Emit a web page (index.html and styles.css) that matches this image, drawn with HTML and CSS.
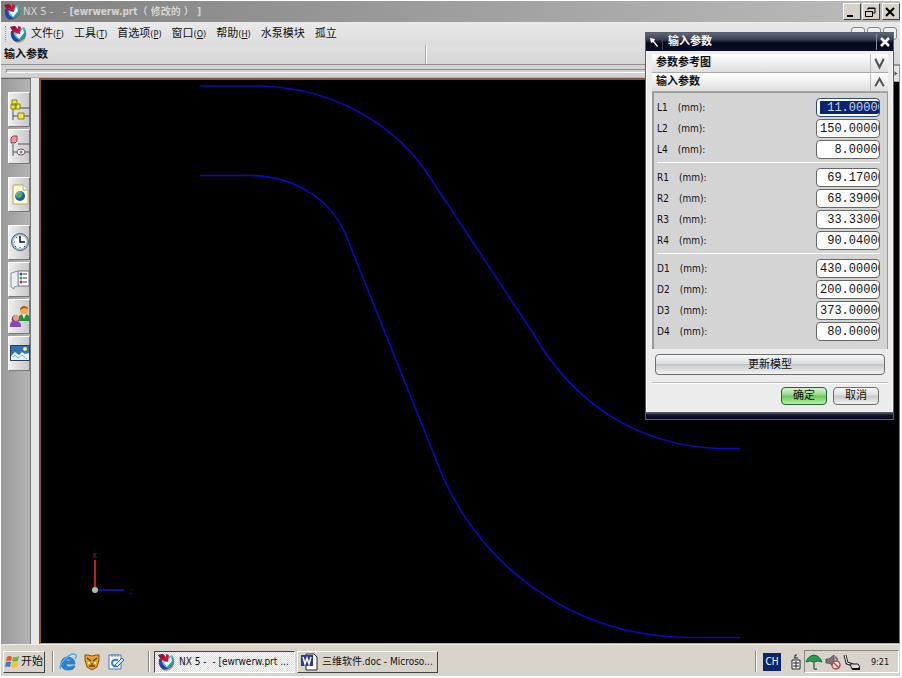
FILE: index.html
```html
<!DOCTYPE html>
<html lang="zh-CN">
<head>
<meta charset="utf-8">
<title>NX 5 - [ewrwerw.prt（修改的）]</title>
<link rel="stylesheet" href="styles.css">
</head>
<body>
<svg class="defs" aria-hidden="true">
  <defs>
    <linearGradient id="teal" x1="0" y1="0" x2="1" y2="1"><stop offset="0" stop-color="#d8fbf6"/><stop offset=".5" stop-color="#3bb3b0"/><stop offset="1" stop-color="#1c5f9a"/></linearGradient>
    <radialGradient id="globe" cx=".35" cy=".3"><stop offset="0" stop-color="#a8ddf5"/><stop offset="1" stop-color="#155fa8"/></radialGradient>
    <symbol id="nx" viewBox="0 0 18 18">
      <path d="M6 6l9-4c3 4 3 9 0 12s-8 3-10 1z" fill="url(#teal)"/>
      <path d="M2 6c-1 5 1 9 5 11l5-1C7 14 5 11 5 6z" fill="#2347a8"/>
      <path d="M7 10l7-6 1 4-5 6z" fill="#dffaf4"/>
      <path d="M1 2l5-1 3 3V1l3 1-1 7-7-2z" fill="#c5163e"/>
      <path d="M1 2l5-1 2 3-4 2z" fill="#8c1640"/>
      <path d="M7 17c4 1 8-1 9-4" fill="none" stroke="#c8893c"/>
    </symbol>
  </defs>
</svg>

<header class="titlebar">
  <svg class="logo"><use href="#nx"/></svg>
  <h1><span>NX 5 -&nbsp;&nbsp; - </span>[ewrwerw.prt（ 修改的 ） ]</h1>
  <div class="window-buttons">
    <button aria-label="最小化"><svg viewBox="0 0 14 12"><path d="M3 10h6" stroke="#000" stroke-width="2"/></svg></button>
    <button aria-label="还原"><svg viewBox="0 0 14 12"><path d="M5 4V2h7v5h-2M5 2.500h7M2 5.500h7M2.500 5v5.500h7V5" fill="none" stroke="#000"/></svg></button>
    <button aria-label="关闭"><svg viewBox="0 0 14 12"><path d="M3 2l8 8M11 2l-8 8" stroke="#000" stroke-width="2"/></svg></button>
  </div>
</header>

<nav class="menubar">
  <span class="grip"></span>
  <svg class="logo"><use href="#nx"/></svg>
  <a href="#">文件<small>(<u>F</u>)</small></a>
  <a href="#">工具<small>(<u>T</u>)</small></a>
  <a href="#">首选项<small>(<u>P</u>)</small></a>
  <a href="#">窗口<small>(<u>O</u>)</small></a>
  <a href="#">帮助<small>(<u>H</u>)</small></a>
  <a href="#">水泵模块</a>
  <a href="#">孤立</a>
  <div class="child-buttons"><i></i><i></i><i></i></div>
</nav>

<div class="prompt"><strong>输入参数</strong><span></span></div>
<div class="toolbar-strip"><span></span><button aria-label="更多工具"><svg viewBox="0 0 8 16"><path d="M2 5l4 3-4 3z" fill="#555"/></svg></button></div>

<main>
  <aside>
    <div class="tabs">
      <button aria-label="装配导航器"><svg viewBox="0 0 21 33">
        <path d="M4 16v11M4 23h5M10 15h11M15 23h6" fill="none" stroke="#4b4a70"/>
        <path d="M3 7h5v5H3zM2 11h5v5H2zM6 11h5v5H6zM9 20h6v6H9z" fill="#f0e83c" stroke="#8c8510"/></svg></button>
      <button aria-label="部件导航器"><svg viewBox="0 0 21 33">
        <path d="M4 14v12M4 22h5M9 14h12M16 22h5" fill="none" stroke="#57546f"/>
        <path d="M2 8l2-2h4v5l-2 2H2z" fill="#e79a9c" stroke="#8c4149"/><ellipse cx="12" cy="22" rx="4" ry="3" fill="#fff" stroke="#705258"/><circle cx="12" cy="22" r="1" fill="#ddd" stroke="#705258"/></svg></button>
      <button class="spaced" aria-label="浏览器"><svg viewBox="0 0 21 33">
        <path d="M4 7h10l5 5v14H4z" fill="#fffbd0" stroke="#bca858"/><path d="M14 7v5h5" fill="#f5f5f5" stroke="#9daab6"/><circle cx="11" cy="18" r="5" fill="url(#globe)"/><path d="M8 15l3-1 2 3-2 3-3-2z" fill="#5fb13c"/></svg></button>
      <button class="spaced" aria-label="历史记录"><svg viewBox="0 0 21 33">
        <circle cx="11" cy="16" r="8.500" fill="#a9c1d4" stroke="#52606d"/><circle cx="11" cy="16" r="6.500" fill="#f3f9ff"/><path d="M11 10v6h5" fill="none" stroke="#111" stroke-width="1.500"/><path d="M5 16h1M11 21v1M7 11l1 1M15 20l1 1M7 20l-1 1" stroke="#456"/></svg></button>
      <button aria-label="系统材料"><svg viewBox="0 0 21 33">
        <path d="M9 8h11v15H9z" fill="#fff" stroke="#6b7583"/><path d="M2 10l7-2v15l-4 1v2l-3-2z" fill="#e8eef2" stroke="#8593a0"/><path d="M14 11h4M14 15h4M14 19h4" stroke="#333"/><circle cx="12" cy="11" r="1.500" fill="#2e46c6"/><circle cx="12" cy="15" r="1.500" fill="#2ea04a"/><circle cx="12" cy="19" r="1.500" fill="#d0204a"/></svg></button>
      <button aria-label="角色"><svg viewBox="0 0 21 33">
        <path d="M9 21c0-5 2-7 6-7s6 2 6 7z" fill="#2c8a3c"/><path d="M13 14l2 5 2-5z" fill="#d9f1d8"/><circle cx="15" cy="10" r="4" fill="#f0a850"/><path d="M11 10c0-5 8-5 8-1-3-1-5-1-8 1z" fill="#b85c1c"/>
        <path d="M1 27c0-5 1-6 5-6s6 1 6 6z" fill="#8346c2"/><path d="M3 21c-2-7 8-9 7 0z" fill="#6d3a68"/><circle cx="7" cy="18" r="3" fill="#e9a07c"/></svg></button>
      <button aria-label="系统可视化场景"><svg viewBox="0 0 21 33">
        <path d="M1.500 8.500h19v15h-19z" fill="#2f72b8" stroke="#2b3d55"/><circle cx="16" cy="12" r="2" fill="#ffee50"/><path d="M2 19l4-4 4 3 3-3 3 2 4-1v7H2z" fill="#e9f3fb"/><path d="M4 20l2-2 3 3 4-3 5 4" fill="none" stroke="#8fb1cf"/></svg></button>
    </div>
    <div class="gutter"></div>
  </aside>
  <section class="viewport">
    <svg viewBox="41 80 858 563" preserveAspectRatio="xMinYMin meet" role="img" aria-label="流道轮廓曲线">
      <g fill="none" stroke="#0c08c0" stroke-width="1.600">
        <path d="M200 86H258C325 87 387 117 425 170L533 333C574 405 640 446 720 448.500H740"/>
        <path d="M200 175.500H250C297 176 333 201 347 238L435 457C472 560 567 637 690 637.500H740"/>
      </g>
      <path d="M95 560v27" stroke="#c81c24" stroke-width="2"/>
      <path d="M98 590h26" stroke="#1010b0" stroke-width="2"/>
      <circle cx="95" cy="590" r="3" fill="#a3c79b"/>
      <text x="92" y="558" fill="#b01820">X</text>
      <text x="129" y="594" fill="#08087c">Z</text>
    </svg>
  </section>
</main>

<form class="dialog">
  <header>
    <svg class="pin" viewBox="0 0 16 16"><path d="M4 4l5 1-1 2 4 5-1 1-4-5-2 1z" fill="#fff"/></svg>
    <h2>输入参数</h2>
    <button type="button" aria-label="关闭"><svg viewBox="0 0 16 16"><path d="M4 4l8 8M12 4l-8 8" stroke="#fff" stroke-width="2.500"/></svg></button>
  </header>
  <div class="body">
    <button type="button" class="section"><span>参数参考图</span><svg viewBox="0 0 16 16"><path d="M4 4l4 8 4-8" fill="none" stroke="#555" stroke-width="2"/></svg></button>
    <button type="button" class="section"><span>输入参数</span><svg viewBox="0 0 16 16"><path d="M4 12l4-7 4 7" fill="none" stroke="#555" stroke-width="2"/></svg></button>
    <div class="fields">
      <div class="group">
        <label for="l1"><b>L1</b>(mm):</label><input id="l1" class="selected" value=" 11.00000">
        <label for="l2"><b>L2</b>(mm):</label><input id="l2" value="150.00000">
        <label for="l4"><b>L4</b>(mm):</label><input id="l4" value="  8.00000">
      </div>
      <div class="group">
        <label for="r1"><b>R1</b>(mm):</label><input id="r1" value=" 69.17000">
        <label for="r2"><b>R2</b>(mm):</label><input id="r2" value=" 68.39000">
        <label for="r3"><b>R3</b>(mm):</label><input id="r3" value=" 33.33000">
        <label for="r4"><b>R4</b>(mm):</label><input id="r4" value=" 90.04000">
      </div>
      <div class="group">
        <label for="d1"><b>D1</b>(mm):</label><input id="d1" value="430.00000">
        <label for="d2"><b>D2</b>(mm):</label><input id="d2" value="200.00000">
        <label for="d3"><b>D3</b>(mm):</label><input id="d3" value="373.00000">
        <label for="d4"><b>D4</b>(mm):</label><input id="d4" value=" 80.00000">
      </div>
    </div>
    <button type="button" class="push update">更新模型</button>
    <div class="actions">
      <button type="button" class="push ok">确定</button>
      <button type="button" class="push">取消</button>
    </div>
  </div>
  <footer></footer>
</form>

<footer class="taskbar">
  <button class="start"><svg viewBox="0 0 16 16"><path d="M3 3q2-2 5 0L7 7Q4 6 2 7z" fill="#e8562c"/><path d="M9 3q3 1 6-1l-1 5q-3 1-6 0z" fill="#6cb33f"/><path d="M2 8q2-1 5 0l-1 5q-3-1-5 0z" fill="#3f78d0"/><path d="M8 8q3 1 6 0l-1 5q-3 1-6 0z" fill="#f4c22c"/></svg>开始</button>
  <span class="divider"></span>
  <div class="quick">
    <svg viewBox="0 0 18 18"><path d="M16 11H7q0 3 3 3 2 0 3-1h3q-1 4-7 4-7 0-7-7 1-6 7-6 7 1 7 7zM7 8h5q-1-2-3-2T7 8z" fill="#2b82c9" stroke="#2b82c9"/><path d="M2 16Q-1 13 6 6t11-4q1 1-1 4" fill="none" stroke="#55aee8" stroke-width="1.500"/></svg>
    <svg viewBox="0 0 18 18"><path d="M2 2h3l4 1 4-1h3v5l-2 7-5 3-5-3-2-7z" fill="#e8a428" stroke="#805018"/><path d="M4 5l4 3M14 5l-4 3M6 13h6" stroke="#643a0c" stroke-width="1.500"/><path d="M5 9h2v2H5zM11 9h2v2h-2z" fill="#fff3a0"/><path d="M8 10h2v3H8z" fill="#945518"/></svg>
    <svg viewBox="0 0 18 18"><path d="M2 2h12v14H2z" fill="#f7fbff" stroke="#477bb0"/><path d="M5 1v3M8 1v3M11 1v3" stroke="#477bb0"/><path d="M11 7q-6-1-6 3t6 3" fill="none" stroke="#3b7ec0" stroke-width="2"/><path d="M8 12l7-7 2 2-7 7z" fill="#cfe8f4" stroke="#355e80"/></svg>
  </div>
  <span class="divider"></span>
  <button class="task active"><svg><use href="#nx"/></svg>NX 5 -&nbsp; - [ewrwerw.prt ...</button>
  <button class="task"><svg viewBox="0 0 18 18"><path d="M6 1h8l3 3v13H6z" fill="#fff" stroke="#222"/><path d="M1 2h12v11H1z" fill="#293a94"/><path d="M3 4l2 7 2-6 2 6 2-7" fill="none" stroke="#fff" stroke-width="1.500"/></svg>三维软件.doc - Microso...</button>
  <span class="divider end"></span>
  <span class="language">CH</span>
  <svg class="ime" viewBox="0 0 12 18"><path d="M2 7h8v9H2z" fill="#fff" stroke="#222"/><path d="M5 5V2h2M4 5h4M3 10h6M3 13h6M6 8v7" fill="none" stroke="#222"/></svg>
  <div class="tray">
    <svg viewBox="0 0 18 18"><path d="M1 9q2-6 8-7 6 1 8 7l-4-1-4 1-4-1z" fill="#299a50" stroke="#14723a"/><path d="M9 8v7q0 2 3 1" fill="none" stroke="#476b50" stroke-width="1.500"/></svg>
    <svg viewBox="0 0 18 18"><path d="M2 6h3l5-4v11L5 10H2z" fill="#777" stroke="#555"/><path d="M11 4q4 2 1 7" fill="none" stroke="#777" stroke-width="2"/><circle cx="12" cy="12" r="4" fill="#eee" stroke="#bd4242" stroke-width="1.500"/><path d="M9 9l6 6" stroke="#bd4242" stroke-width="1.500"/></svg>
    <svg viewBox="0 0 18 18"><path d="M2 2l2 8 6 2" fill="none" stroke="#222" stroke-width="3"/><path d="M2 2l2 8 6 2" fill="none" stroke="#fff"/><path d="M7 11h8l2 3-3 2H9z" fill="#ddd" stroke="#222"/><path d="M9 16h8" stroke="#111" stroke-width="2"/></svg>
    <time>9:21</time>
  </div>
</footer>
</body>
</html>
```
FILE: styles.css
```css
* { box-sizing: border-box; }

body {
  margin: 0;
  padding: 1px 2px 2px 1px;
  min-height: 100vh;
  display: flex;
  flex-direction: column;
  position: relative;
  background: #fff;
  color: #111;
  font: 11px/16px "DejaVu Sans Condensed", "Noto Sans CJK SC", sans-serif;
}

button, input { font: inherit; color: inherit; margin: 0; }
button { padding: 0; }
h1, h2 { margin: 0; font-size: 11px; }
a { color: inherit; text-decoration: none; }
svg { display: block; flex: none; }
.defs { position: absolute; width: 0; height: 0; }
.logo { width: 18px; height: 18px; }

.titlebar {
  height: 21px;
  display: flex;
  align-items: center;
  padding: 0 0 0 2px;
  background: linear-gradient(90deg, #808080, #bcbcbc);
}
.titlebar h1 { flex: 1; padding-left: 2px; color: #d6d3ce; font-size: 10px; white-space: nowrap; }
.titlebar h1 span { font-weight: normal; font-size: 11px; }
.window-buttons { display: flex; }
.window-buttons button {
  width: 18px;
  height: 17px;
  background: #d6d2ca;
  border: 1px solid;
  border-color: #fff #404040 #404040 #fff;
}
.window-buttons button:last-child { margin-left: 2px; }
.window-buttons button:nth-child(2) { margin-left: 1px; }
.window-buttons svg { width: 14px; height: 12px; }

.menubar {
  height: 23px;
  display: flex;
  align-items: center;
  gap: 10px;
  padding-left: 4px;
  background: linear-gradient(#eaeaea, #dcdcdc);
  white-space: nowrap;
}
.menubar .logo { margin-right: -6px; }
.menubar small { font-size: 9px; }
.grip { width: 2px; height: 16px; margin-right: -8px; border-left: 1px dotted #999; }
.child-buttons { display: flex; gap: 2px; margin-left: auto; padding-right: 3px; }
.child-buttons i { width: 14px; height: 13px; border: 1px solid #888; border-radius: 3px; background: #eee; }

.prompt {
  height: 19px;
  display: grid;
  grid-template-columns: 424px 1fr;
  background: linear-gradient(#dfdfdf, #d6d6d6);
}
.prompt strong { padding: 2px 0 0 3px; }
.prompt span { border-left: 1px solid #aaa; box-shadow: inset 1px 0 #fff; }

.toolbar-strip {
  position: relative;
  height: 14px;
  padding: 4px 3px 0 5px;
  background: #d2d2d2;
  border-top: 1px solid #929292;
  border-bottom: 1px solid #b4b4b4;
}
.toolbar-strip span { display: block; height: 4px; border: 1px solid; border-color: #8c8c8c #fff #fff #8c8c8c; }
.toolbar-strip button { position: absolute; top: 0; right: 0; width: 8px; height: 17px; border: 1px solid #999; background: #e4e4e4; }
.toolbar-strip svg { width: 6px; height: 15px; }

main { flex: 1; display: flex; min-height: 0; }
aside { display: flex; width: 38px; flex: none; }
.tabs {
  width: 30px;
  padding: 13px 0 0 7px;
  background: linear-gradient(90deg, #999, #b4b4b4);
  border-top: 1px solid #666;
  border-right: 1px solid #777;
  display: flex;
  flex-direction: column;
  gap: 2px;
}
.tabs button {
  height: 35px;
  background: linear-gradient(90deg, #eee, #c8c8c8);
  border: 1px solid;
  border-color: #fff #777 #777 #fff;
}
.tabs .spaced { margin-top: 11px; }
.tabs svg { width: 21px; height: 33px; }
.gutter { flex: 1; background: #e8e8e8; }

.viewport {
  flex: 1;
  min-width: 0;
  background: #000;
  border: 2px solid #86543a;
  border-right: 1px solid #c05a42;
  border-bottom: 1px solid #e8a070;
  overflow: hidden;
}
.viewport svg { width: 100%; height: auto; }
.viewport text { font: 7px "DejaVu Sans", sans-serif; }

.dialog {
  position: absolute;
  top: 32px;
  right: 8px;
  width: 249px;
  background: #ececec;
  border: 1px solid #5a5e6c;
}
.dialog > header {
  height: 18px;
  display: flex;
  align-items: center;
  color: #fff;
  background: linear-gradient(#606678, #3a4056 35%, #05081c 55%, #0a0e24);
}
.dialog header h2 { flex: 1; padding-left: 5px; border-left: 1px solid #444a5c; }
.dialog header button { background: none; border: 0; border-left: 1px solid #8a90a0; }
.dialog header svg { width: 16px; height: 16px; }
.dialog > footer { height: 7px; background: linear-gradient(#666b78, #10142a 45%, #060920); }
.body { padding: 3px 4px 7px 5px; border: solid #f8f8f8; border-width: 0 1px; }

.section {
  width: 100%;
  height: 19px;
  display: flex;
  justify-content: space-between;
  align-items: center;
  padding-left: 4px;
  border: 0;
  border-bottom: 1px solid #aaa;
  background: linear-gradient(#fff, #dedede);
  font-weight: bold;
}
.section svg { width: 18px; height: 18px; border-left: 1px solid #bbb; }

.fields {
  display: flex;
  flex-direction: column;
  padding: 5px 7px 8px 3px;
  background: #d4d4d4;
  border: solid #9a9a9a;
  border-width: 1px 1px 0 2px;
}
.group {
  display: grid;
  grid-template-columns: 1fr 64px;
  row-gap: 2px;
  font-size: 10px;
  line-height: 19px;
}
.group + .group { margin-top: 3px; padding-top: 5px; border-top: 1px solid #fff; }
.group label { display: flex; gap: 10px; }
.group b { font-weight: normal; }
.group input {
  width: 64px;
  height: 19px;
  padding: 2px 0 2px 3px;
  border: 1px solid #666;
  border-radius: 4px;
  background: #fff;
  font: 12px/14px "Liberation Mono", monospace;
  outline: 0;
}
.group .selected { border-color: #2c4c7c; color: #c4d8f0; background: linear-gradient(#0c2470, #0c2470) content-box, #fff; }

.push {
  padding: 0 11px;
  height: 18px;
  border: 1px solid #6c6c6c;
  border-radius: 4px;
  line-height: 14px;
  background: linear-gradient(#fafafa, #dadede 45%, #c4c8c8 50%, #f4f4f4);
}
.update { display: block; width: calc(100% - 6px); height: 21px; margin: 5px 3px 7px; }
.actions {
  display: flex;
  justify-content: flex-end;
  gap: 6px;
  padding: 4px 9px 0 0;
  border-top: 1px solid #bbb;
  box-shadow: inset 0 1px #fff;
}
.ok { border-color: #246434; background: linear-gradient(#d8f4d0, #90d884 45%, #66c45c 50%, #b8f0a0); }

.taskbar {
  height: 32px;
  display: flex;
  align-items: center;
  padding: 2px 1px 0 2px;
  background: #d8d4cc;
  border-top: 1px solid #f0ece4;
  white-space: nowrap;
}
.taskbar button {
  height: 22px;
  display: flex;
  align-items: center;
  background: #d8d4cc;
  border: 1px solid;
  border-color: #fff #444 #444 #fff;
}
.start { width: 42px; gap: 1px; }
.start svg { width: 16px; height: 16px; }
.divider { width: 2px; height: 21px; margin: 0 4px 0 7px; border-left: 1px solid #888; border-right: 1px solid #fff; }
.quick { display: flex; gap: 6px; width: 90px; padding-left: 1px; }
.quick svg, .tray svg { width: 18px; height: 18px; }
.quick + .divider { margin: 0 4px 0 0; }
.task { width: 141px; gap: 4px; padding: 0 2px; overflow: hidden; font-size: 10px; }
.task svg { width: 18px; height: 18px; }
.taskbar .active { margin-right: 2px; border-color: #444 #fff #fff #444; background: repeating-conic-gradient(#fff 0 25%, #dedad4 0 50%) 0 0 / 2px 2px; }
.end { margin: 0 6px 0 auto; }
.language { width: 18px; height: 18px; color: #fff; background: #0c246c; text-align: center; font-size: 10px; line-height: 18px; }
.ime { width: 12px; height: 18px; margin: 0 2px 0 9px; }
.tray {
  display: flex;
  align-items: center;
  gap: 1px;
  width: 95px;
  height: 23px;
  border: 1px solid;
  border-color: #888 #fff #fff #888;
}
.tray time { flex: 1; text-align: center; font-size: 9px; }
```
